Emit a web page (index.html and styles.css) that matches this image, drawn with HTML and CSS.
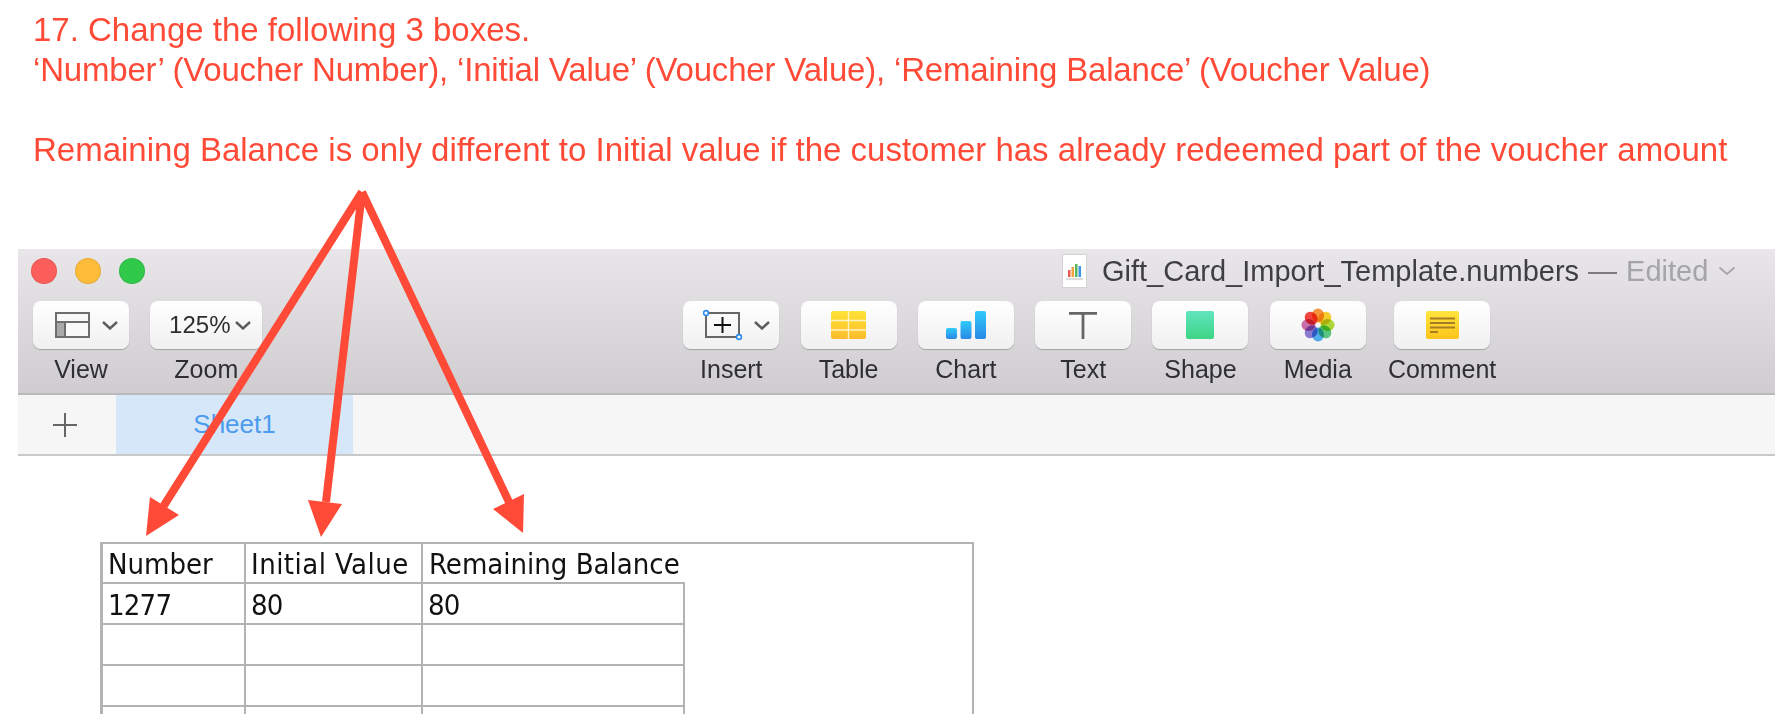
FILE: index.html
```html
<!doctype html>
<html>
<head>
    <title>Voucher import step 17</title>
    <link rel="stylesheet" href="styles.css">
</head>

<body>
    <div class="notes">
        <p>17. Change the following 3 boxes.</p>
        <p class="notes-tight">‘Number’ (Voucher Number), ‘Initial Value’ (Voucher Value), ‘Remaining Balance’ (Voucher Value)</p>
        <p class="blank">&nbsp;</p>
        <p>Remaining Balance is only different to Initial value if the customer has already redeemed part of the voucher amount</p>
    </div>

    <div class="window">
        <div class="toolbar">
            <div class="title-row">
                <div class="traffic-lights">
                    <span class="light red"></span>
                    <span class="light yellow"></span>
                    <span class="light green"></span>
                </div>
                <div class="doc-title">
                    <svg class="doc-icon" width="25" height="34" viewBox="0 0 25 34">
                        <rect x="0.5" y="0.5" width="24" height="33" fill="#fff" stroke="#d4d4d4"/>
                        <rect x="6" y="16" width="2.5" height="7" fill="#ef5a50"/>
                        <rect x="9.5" y="13" width="2.5" height="10" fill="#f2a23c"/>
                        <rect x="13" y="10" width="2.5" height="13" fill="#58b858"/>
                        <rect x="16.5" y="12" width="2.5" height="11" fill="#3a96e8"/>
                        <rect x="4" y="24" width="17" height="2" fill="#dcdcdc"/>
                    </svg>
                    <span class="doc-text doc-name">Gift_Card_Import_Template.numbers</span>
                    <span class="doc-text doc-dash">—</span>
                    <span class="doc-text doc-state">Edited</span>
                    <svg class="doc-chevron" width="18" height="10" viewBox="0 0 18 10">
                        <path d="M1.5 1.5 L9 8 L16.5 1.5" fill="none" stroke="#a9a7a9" stroke-width="2"/>
                    </svg>
                </div>
            </div>

            <div class="tool-row">
                <div class="tool-group">
                    <div class="tool tool-split">
                        <div class="tool-btn">
                            <svg width="36" height="27" viewBox="0 0 36 27">
                                <rect x="1" y="1" width="33" height="24" fill="#f8f8f8" stroke="#6e6e6e" stroke-width="2"/>
                                <rect x="2" y="10" width="8" height="14" fill="#a8a8a8"/>
                                <path d="M1 10 H34 M10 10 V25" fill="none" stroke="#6e6e6e" stroke-width="2"/>
                            </svg>
                            <svg class="chevron" width="16" height="9" viewBox="0 0 16 9">
                                <path d="M1 1 L8 7.5 L15 1" fill="none" stroke="#5c5c5c" stroke-width="2.4"/>
                            </svg>
                        </div>
                        <span class="tool-label">View</span>
                    </div>
                    <div class="tool tool-wide">
                        <div class="tool-btn">
                            <span class="zoom-value">125%</span>
                            <svg class="chevron" width="16" height="9" viewBox="0 0 16 9">
                                <path d="M1 1 L8 7.5 L15 1" fill="none" stroke="#5c5c5c" stroke-width="2.4"/>
                            </svg>
                        </div>
                        <span class="tool-label">Zoom</span>
                    </div>
                </div>

                <div class="tool-group insert-group">
                    <div class="tool tool-split">
                        <div class="tool-btn">
                            <svg width="40" height="32" viewBox="0 0 40 32">
                                <rect x="3" y="4" width="33" height="24" fill="none" stroke="#666" stroke-width="2"/>
                                <path d="M19.5 8 V24 M11 16 H28" fill="none" stroke="#111" stroke-width="2"/>
                                <circle cx="3" cy="4" r="2.4" fill="#fff" stroke="#2d8cf0" stroke-width="1.6"/>
                                <circle cx="36" cy="28" r="2.4" fill="#fff" stroke="#2d8cf0" stroke-width="1.6"/>
                            </svg>
                            <svg class="chevron" width="16" height="9" viewBox="0 0 16 9">
                                <path d="M1 1 L8 7.5 L15 1" fill="none" stroke="#5c5c5c" stroke-width="2.4"/>
                            </svg>
                        </div>
                        <span class="tool-label">Insert</span>
                    </div>
                    <div class="tool">
                        <div class="tool-btn">
                            <svg width="35" height="28" viewBox="0 0 35 28">
                                <defs>
                                    <linearGradient id="tableFill" x1="0" y1="0" x2="0" y2="1">
                                        <stop offset="0" stop-color="#ffe335"/>
                                        <stop offset="1" stop-color="#fdbb2d"/>
                                    </linearGradient>
                                </defs>
                                <rect width="35" height="28" rx="2" fill="url(#tableFill)"/>
                                <path d="M17.5 0 V28 M0 9.5 H35 M0 19 H35" stroke="#fff3c4" stroke-width="1.4"/>
                            </svg>
                        </div>
                        <span class="tool-label">Table</span>
                    </div>
                    <div class="tool">
                        <div class="tool-btn">
                            <svg width="40" height="28" viewBox="0 0 40 28">
                                <defs>
                                    <linearGradient id="barFill" x1="0" y1="0" x2="0" y2="1">
                                        <stop offset="0" stop-color="#30cbfb"/>
                                        <stop offset="1" stop-color="#2a88e6"/>
                                    </linearGradient>
                                </defs>
                                <rect x="0" y="17" width="11" height="11" rx="2" fill="url(#barFill)"/>
                                <rect x="14.5" y="10" width="11" height="18" rx="2" fill="url(#barFill)"/>
                                <rect x="29" y="0" width="11" height="28" rx="2" fill="url(#barFill)"/>
                            </svg>
                        </div>
                        <span class="tool-label">Chart</span>
                    </div>
                    <div class="tool">
                        <div class="tool-btn">
                            <svg width="28" height="27" viewBox="0 0 28 27">
                                <path d="M0 1.4 H28 M14 1 V27" fill="none" stroke="#666" stroke-width="2.8"/>
                            </svg>
                        </div>
                        <span class="tool-label">Text</span>
                    </div>
                    <div class="tool">
                        <div class="tool-btn">
                            <svg width="28" height="28" viewBox="0 0 28 28">
                                <defs>
                                    <linearGradient id="shapeFill" x1="0" y1="0" x2="0" y2="1">
                                        <stop offset="0" stop-color="#62e4c0"/>
                                        <stop offset="1" stop-color="#3dd584"/>
                                    </linearGradient>
                                </defs>
                                <rect width="28" height="28" rx="2" fill="url(#shapeFill)"/>
                            </svg>
                        </div>
                        <span class="tool-label">Shape</span>
                    </div>
                    <div class="tool">
                        <div class="tool-btn">
                            <svg class="petals" width="34" height="34" viewBox="-17 -17 34 34">
                                <ellipse cx="0" cy="-9.6" rx="6" ry="7" fill="#f8963a"/>
                                <ellipse cx="0" cy="-9.6" rx="6" ry="7" fill="#f9d02e" transform="rotate(45)"/>
                                <ellipse cx="0" cy="-9.6" rx="6" ry="7" fill="#b4dc3c" transform="rotate(90)"/>
                                <ellipse cx="0" cy="-9.6" rx="6" ry="7" fill="#5ccf86" transform="rotate(135)"/>
                                <ellipse cx="0" cy="-9.6" rx="6" ry="7" fill="#56b4f4" transform="rotate(180)"/>
                                <ellipse cx="0" cy="-9.6" rx="6" ry="7" fill="#8f80d8" transform="rotate(225)"/>
                                <ellipse cx="0" cy="-9.6" rx="6" ry="7" fill="#d070b0" transform="rotate(270)"/>
                                <ellipse cx="0" cy="-9.6" rx="6" ry="7" fill="#f4453e" transform="rotate(315)"/>
                            </svg>
                        </div>
                        <span class="tool-label">Media</span>
                    </div>
                    <div class="tool tool-comment">
                        <div class="tool-btn">
                            <svg width="33" height="28" viewBox="0 0 33 28">
                                <defs>
                                    <linearGradient id="noteFill" x1="0" y1="0" x2="0" y2="1">
                                        <stop offset="0" stop-color="#ffe53c"/>
                                        <stop offset="1" stop-color="#fdc41c"/>
                                    </linearGradient>
                                </defs>
                                <rect width="33" height="28" rx="2" fill="url(#noteFill)"/>
                                <path d="M4 7.5 H29 M4 12 H29 M4 16.5 H29 M4 21 H12" stroke="#a67c24" stroke-width="1.8"/>
                            </svg>
                        </div>
                        <span class="tool-label">Comment</span>
                    </div>
                </div>
            </div>
        </div>

        <div class="tab-bar">
            <div class="tab-add">
                <svg width="24" height="24" viewBox="0 0 24 24">
                    <path d="M12 0 V24 M0 12 H24" stroke="#666" stroke-width="2"/>
                </svg>
            </div>
            <div class="tab-active">Sheet1</div>
        </div>
    </div>

    <div class="sheet-frame">
        <table class="sheet">
            <tr class="head-row">
                <td class="col-a">Number</td>
                <td class="col-b">Initial Value</td>
                <td class="col-c">Remaining Balance</td>
            </tr>
            <tr class="num-row">
                <td>1277</td>
                <td>80</td>
                <td>80</td>
            </tr>
            <tr><td></td><td></td><td></td></tr>
            <tr><td></td><td></td><td></td></tr>
            <tr><td></td><td></td><td></td></tr>
        </table>
    </div>

    <!-- red arrows drawn over the screenshot -->
    <svg class="arrows" width="1792" height="714" viewBox="0 0 1792 714">
        <path d="M362 192 L163 507 M362 192 L326 502 M362 192 L509 502" fill="none" stroke="#ff4a37" stroke-width="8"/>
        <polygon points="146,536 150,497 179,515" fill="#ff4a37"/>
        <polygon points="321,537 308,500 342,504" fill="#ff4a37"/>
        <polygon points="523,533 524,494 493,509" fill="#ff4a37"/>
    </svg>
</body>
</html>
```

FILE: styles.css
```css
body {
    font-family: "Liberation Sans", Arial, sans-serif;
    margin: 0;
    height: 714px;
    overflow: hidden;
    position: relative;
    background-color: #fff;
}

.notes {
    padding: 10px 0 0 33px;
    height: 249px;
    box-sizing: border-box;
    color: #ff4a37;
    font-size: 33px;
    line-height: 40px;
}

.notes p {
    margin: 0;
    white-space: nowrap;
}

.notes-tight {
    letter-spacing: -0.19px;
}

.window {
    margin: 0 17px 0 18px;
}

.toolbar {
    height: 146px;
    box-sizing: border-box;
    background: linear-gradient(#e8e6e9, #cfcdd0);
    border-bottom: 2px solid #b9b8ba;
}

.title-row {
    height: 52px;
    display: flex;
    align-items: flex-start;
}

.traffic-lights {
    display: flex;
    gap: 18px;
    margin-left: 13px;
    margin-top: 9px;
}

.light {
    width: 26px;
    height: 26px;
    box-sizing: border-box;
    border-radius: 50%;
    border: 1px solid rgba(0, 0, 0, 0.08);
}

.red { background-color: #fc5e5b; }
.yellow { background-color: #fdbb3a; }
.green { background-color: #30c94a; }

.doc-title {
    display: flex;
    align-items: center;
    margin-left: 917px;
    margin-top: 4px;
    font-size: 29px;
    color: #3f3e40;
}

.doc-text {
    padding-top: 2px;
}

.doc-name {
    margin-left: 15px;
}

.doc-dash {
    margin-left: 9px;
    color: #7b7a7c;
}

.doc-state {
    margin-left: 9px;
    color: #a5a4a6;
}

.doc-chevron {
    margin-left: 10px;
}

.tool-row {
    display: flex;
    padding-left: 15px;
}

.tool-group {
    display: flex;
    gap: 21.3px;
}

.insert-group {
    margin-left: 421px;
}

.tool {
    width: 96px;
    display: flex;
    flex-direction: column;
    align-items: center;
}

.tool-wide {
    width: 112px;
}

.tool-comment {
    margin-left: 7px;
}

.tool-btn {
    width: 100%;
    height: 48px;
    box-sizing: border-box;
    display: flex;
    justify-content: center;
    align-items: center;
    gap: 11px;
    background: linear-gradient(#fff, #f0f0f0);
    border-radius: 8px;
    box-shadow: 0 1px 1px rgba(0, 0, 0, 0.25);
}

.tool-split .tool-btn {
    padding-left: 10px;
}

.zoom-value {
    font-size: 24px;
    color: #2e2d2f;
}

.tool-wide .tool-btn {
    gap: 5px;
    padding-left: 8px;
}

.chevron {
    flex-shrink: 0;
}

.petals ellipse {
    mix-blend-mode: multiply;
}

.tool-label {
    margin-top: 5px;
    font-size: 25px;
    line-height: 30px;
    color: #2f2e30;
    white-space: nowrap;
}

.tab-bar {
    height: 61px;
    box-sizing: border-box;
    display: flex;
    background-color: #f6f6f6;
    border-bottom: 2px solid #c9c9c9;
}

.tab-add {
    width: 98px;
    display: flex;
    justify-content: center;
    align-items: center;
    box-sizing: border-box;
    padding: 1px 4px 0 0;
}

.tab-active {
    width: 237px;
    display: flex;
    justify-content: center;
    align-items: center;
    background-color: #d7e7fa;
    color: #4b9bef;
    font-size: 26px;
}

.sheet-frame {
    margin: 86px 0 0 100px;
    width: 874px;
    height: 172px;
    overflow: hidden;
    box-sizing: border-box;
    border: 2px solid #b3b3b3;
    border-bottom: none;
}

.sheet {
    border-collapse: collapse;
    table-layout: fixed;
    width: 584px;
    margin: -3px 0 0 -1px;
    font-family: "DejaVu Sans Condensed", "DejaVu Sans", sans-serif;
    font-size: 29px;
    color: #111;
}

.sheet td {
    height: 36px;
    padding: 3px 0 0 5px;
    border: 2px solid #b3b3b3;
    white-space: nowrap;
    overflow: visible;
}

.col-a { width: 136px; }
.col-b { width: 170px; letter-spacing: 0.45px; }

.head-row td {
    border-top-color: transparent;
}

.head-row .col-c {
    border-right: none;
    padding-left: 6px;
}

.num-row td {
    letter-spacing: -0.8px;
}

.arrows {
    position: absolute;
    top: 0;
    left: 0;
    pointer-events: none;
}
```
